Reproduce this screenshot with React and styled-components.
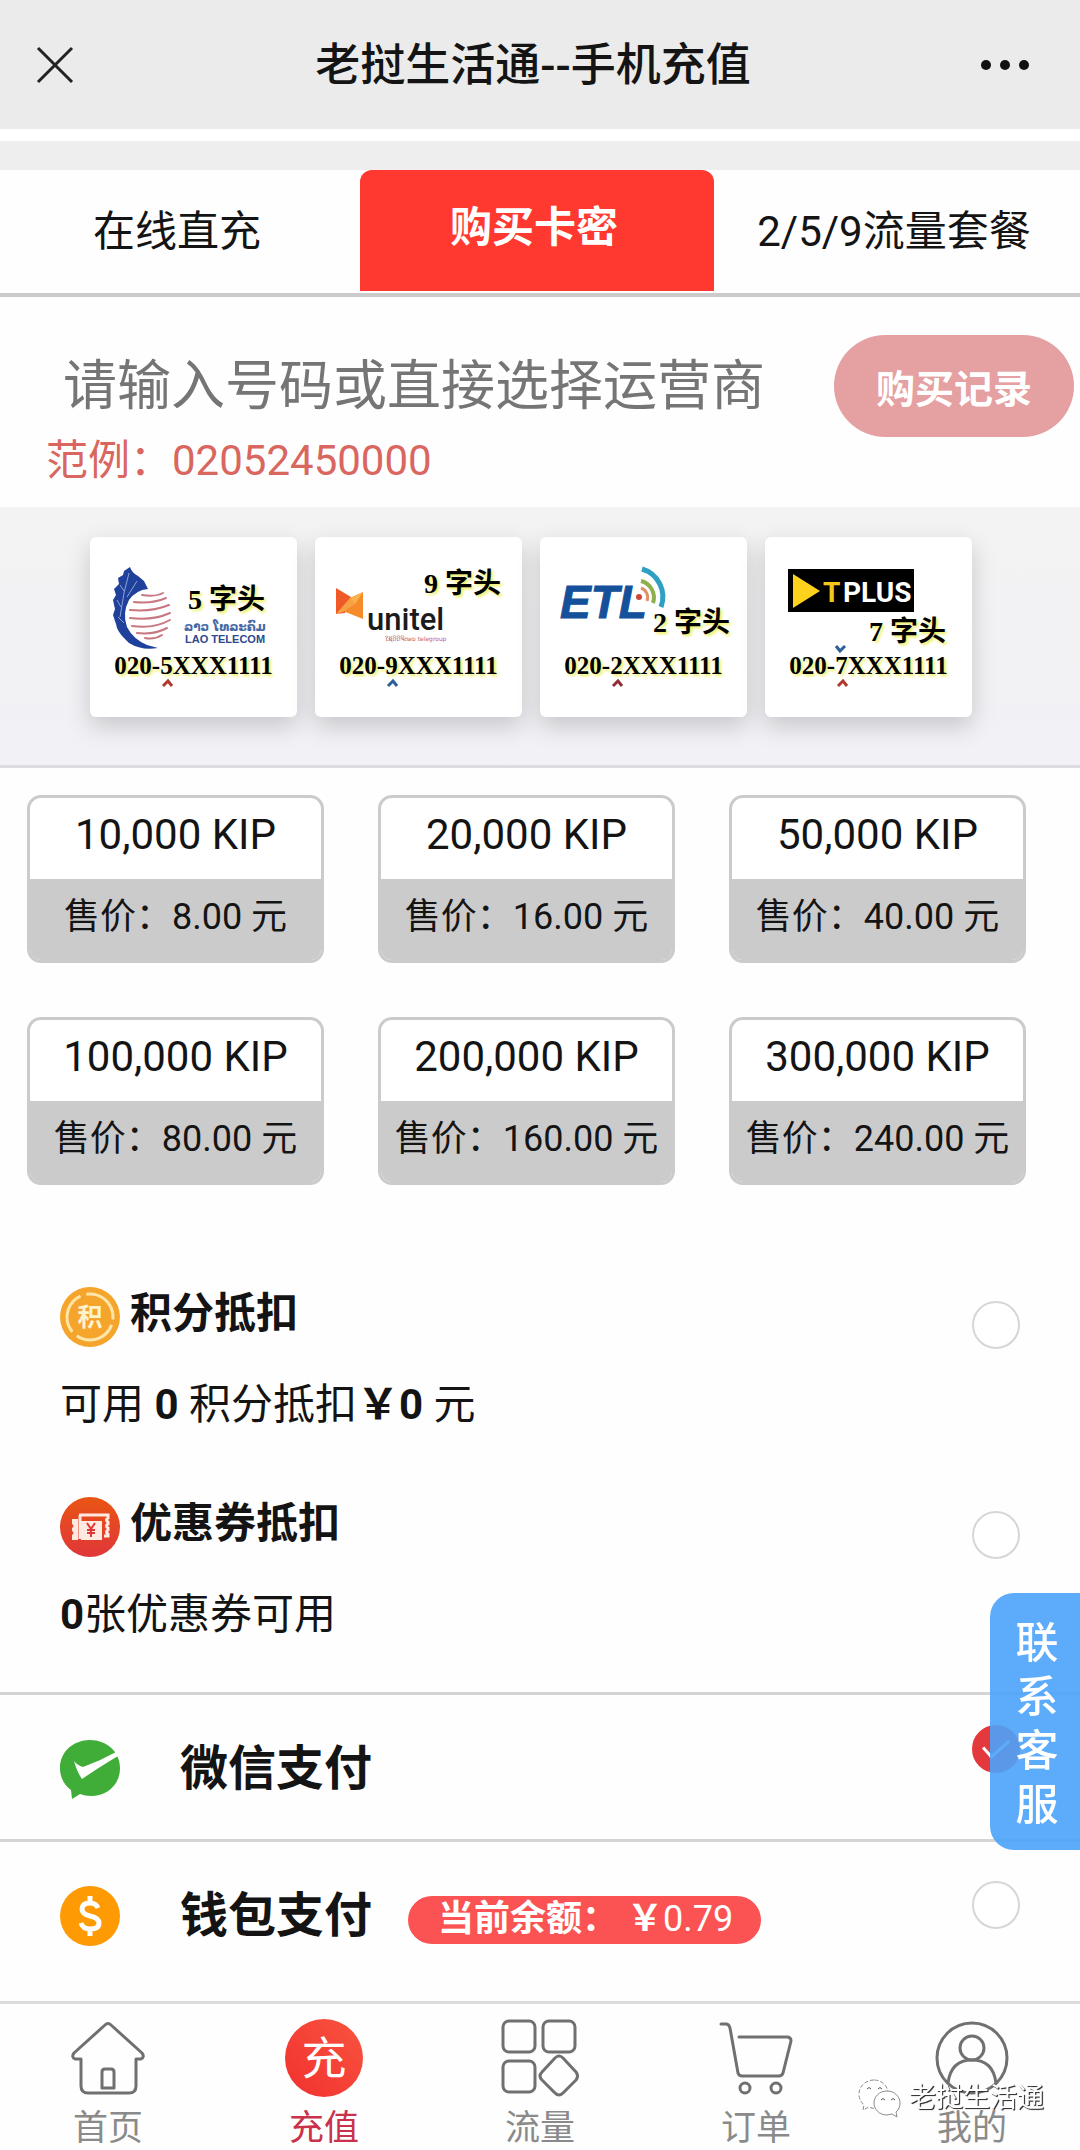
// App.jsx
import { useState } from "react";
import styled, { createGlobalStyle } from "styled-components";

const GlobalStyle = createGlobalStyle`
  * {
    box-sizing: border-box;
  }

  body {
    margin: 0;
    background: #fefefe;
    color: #141414;
    font-family: Roboto, "Noto Sans CJK SC", sans-serif;
  }

  button,
  input {
    font-family: inherit;
    color: inherit;
    margin: 0;
    padding: 0;
    border: none;
    background: none;
  }

  button {
    cursor: pointer;
  }
`;

const Page = styled.div`
  display: flex;
  flex-direction: column;
  min-height: 100vh;
`;

const Header = styled.header`
  display: grid;
  grid-template-columns: 1fr auto 1fr;
  align-items: center;
  height: 129px;
  padding: 0 50px 0 36px;
  background: #ebebeb;
`;

const HeaderButton = styled.button`
  display: flex;
  justify-self: ${(props) => (props.$end ? "end" : "start")};
`;

const Title = styled.h1`
  margin: 0;
  padding-top: 2px;
  font-size: 45px;
  font-weight: 500;
  line-height: 60px;
`;

const Strip = styled.div`
  height: 41px;
  border-top: 12px solid #fff;
  background: #eee;
`;

const Tabs = styled.nav`
  display: grid;
  grid-template-columns: 360fr 354fr 366fr;
  height: 127px;
  padding-bottom: 2px;
  border-bottom: 4px solid #cbcbcb;
`;

const Tab = styled.button`
  font-size: 42px;
  white-space: nowrap;
  font-weight: ${(props) => (props.$active ? 700 : 400)};
  color: ${(props) => (props.$active ? "#fff" : "#141414")};
  background: ${(props) => (props.$active ? "#ff3830" : "transparent")};
  border-radius: 12px 12px 0 0;
  padding: 0 6px ${(props) => (props.$active ? 14 : 6)}px 0;
`;

const Search = styled.section`
  display: flex;
  align-items: flex-start;
  padding: 38px 6px 20px 46px;
`;

const Field = styled.div`
  flex: 1;
  min-width: 0;
`;

const NumberInput = styled.input`
  display: block;
  width: 100%;
  height: 100px;
  padding: 2px 0 0 17px;
  font-size: 54px;
  outline: none;

  &::placeholder {
    color: #757575;
    opacity: 1;
  }
`;

const Hint = styled.p`
  margin: 0;
  font-size: 42px;
  line-height: 52px;
  color: #d9665f;
`;

const RecordButton = styled.button`
  width: 240px;
  height: 102px;
  border-radius: 51px;
  background: #e5a0a1;
  color: #fff;
  font-size: 39px;
  font-weight: 700;
`;

const Operators = styled.section`
  display: grid;
  grid-template-columns: repeat(4, 1fr);
  gap: 18px;
  padding: 30px 108px 48px 90px;
  border-bottom: 3px solid #dcdce2;
  background: linear-gradient(#f3f3f3, #f1f1f6);
`;

const OperatorCard = styled.button`
  display: flex;
  flex-direction: column;
  align-items: center;
  height: 180px;
  border-radius: 6px;
  background: #fff;
  box-shadow: 0 9px 24px rgba(0, 0, 0, 0.18);

  svg {
    display: block;
    overflow: visible;
  }
`;

const Sample = styled.span`
  font-family: "Liberation Serif", serif;
  font-size: 25px;
  font-weight: 700;
  line-height: 30px;
  color: #000;
  text-shadow: 2px 2px 3px #eeee5c;
`;

const Prefix = styled.text`
  font-family: "Liberation Serif", "Noto Sans CJK SC", serif;
  font-size: 28px;
  font-weight: 700;
  fill: #000;
  text-shadow: 2px 2px 3px #eeee5c;
`;

const Amounts = styled.section`
  display: grid;
  grid-template-columns: repeat(3, 1fr);
  gap: 54px;
  padding: 27px 54px 0 27px;
`;

const AmountCard = styled.button`
  display: flex;
  flex-direction: column;
  height: 168px;
  border: 3px solid #cbcbcb;
  border-radius: 14px;
  overflow: hidden;
  background: #fff;
`;

const Amount = styled.span`
  width: 100%;
  height: 81px;
  font-size: 42px;
  line-height: 74px;
`;

const Price = styled.span`
  flex: 1;
  width: 100%;
  font-size: 36px;
  line-height: 76px;
  white-space: nowrap;
  background: #cbcbcb;
`;

const Discounts = styled.section`
  display: flex;
  flex-direction: column;
  gap: 57px;
  padding: 96px 60px 48px;
`;

const Discount = styled.label`
  display: flex;
  justify-content: space-between;
  align-items: flex-start;
  height: 153px;
`;

const DiscountTitle = styled.span`
  display: flex;
  align-items: center;
  gap: 10px;
  height: 72px;
  font-size: 42px;
  font-weight: 700;
  line-height: 60px;
`;

const DiscountName = styled.span`
  padding-bottom: 6px;
`;

const DiscountText = styled.span`
  display: block;
  margin-top: 22px;
  font-size: 42px;
  line-height: 60px;
`;

const Tick = styled.input`
  appearance: none;
  display: grid;
  place-content: center;
  flex: none;
  width: 48px;
  height: 48px;
  margin-top: 20px;
  border: 2px solid #d6d6d6;
  border-radius: 50%;
  background: #fff;

  &:checked {
    border-color: #e4393c;
    background: #e4393c;
  }

  &:checked::after {
    content: "";
    width: 22px;
    height: 11px;
    border: solid #fff;
    border-width: 0 0 3px 3px;
    transform: rotate(-42deg) translate(2px, -3px);
  }
`;

const PayTick = styled(Tick)`
  align-self: flex-start;
  margin-top: ${(props) => (props.checked ? 27 : 36)}px;
  margin-left: auto;
`;

const PayRow = styled.label`
  display: flex;
  align-items: center;
  height: 147px;
  padding: 3px 60px 0;
  border-top: 3px solid #d4d4d4;
`;

const PayName = styled.span`
  margin-left: 60px;
  font-size: 48px;
  font-weight: 700;
  line-height: 60px;
`;

const Balance = styled.span`
  height: 48px;
  margin: 9px 0 0 36px;
  padding: 0 28px 0 30px;
  border-radius: 24px;
  background: #fb5253;
  color: #fff;
  font-size: 36px;
  line-height: 46px;
  white-space: pre;
`;

const Contact = styled.button`
  position: fixed;
  right: 0;
  bottom: 300px;
  display: flex;
  flex-direction: column;
  align-items: center;
  justify-content: center;
  width: 90px;
  height: 257px;
  padding: 4px 0 0 4px;
  border-radius: 24px 0 0 24px;
  background: rgba(75, 163, 251, 0.9);
  color: #fff;
  font-size: 43px;
  font-weight: 500;
  line-height: 54px;
`;

const TabBar = styled.nav`
  display: grid;
  grid-template-columns: repeat(5, 1fr);
  height: 149px;
  margin-top: auto;
  padding-top: 15px;
  border-top: 3px solid #dcdcdc;
`;

const TabItem = styled.a`
  display: flex;
  flex-direction: column;
  align-items: center;
  gap: 12px;
  color: ${(props) => (props.$active ? "#c9324a" : "#8a8a8a")};
  font-size: 35px;
  line-height: 40px;
  text-decoration: none;
`;

const Watermark = styled.div`
  position: fixed;
  right: 36px;
  bottom: 32px;
  display: flex;
  align-items: center;
  gap: 8px;
  color: #fff;
  font-size: 27px;
  line-height: 30px;
  text-shadow: 1px 1px 1px #333, 1px 1px 0 #555;
`;

const LaoTelecomArt = () => (
  <svg width="207" height="114" viewBox="0 0 207 114" aria-hidden="true">
    <path
      d="M40 30 Q42 36 48 39 L54 44 L58 52 Q46 53 39 63 Q32 76 37 90 Q43 102 57 108 L68 111 Q52 114 39 106 L34 101 Q27 94 26 87 L23 78 L25 72 L23 63 L26 58 L24 52 L29 47 L28 41 L33 38 L34 34 Z"
      fill="#1f419b"
    />
    <path
      d="M39 36 L34 56 L30 80 M47 44 L37 60 M30 48 L34 54 M27 63 L31 70 M28 80 L34 86"
      stroke="#8ea2d4"
      strokeWidth="1"
      fill="none"
    />
    <g fill="none" stroke="#c87880" strokeWidth="2" strokeLinecap="round">
      <path d="M52 58 Q66 60 73 56" />
      <path d="M44 65 Q62 67 76 61" />
      <path d="M40 73 Q62 75 79 68" />
      <path d="M40 81 Q62 84 80 76" />
      <path d="M42 89 Q64 92 80 83" />
      <path d="M47 96 Q64 98 77 91" />
      <path d="M55 101 Q64 103 72 98" />
    </g>
    <Prefix x="98" y="72">5 字头</Prefix>
    <text x="94" y="94" fontFamily="DejaVu Sans" fontSize="12" fontWeight="700" fill="#4668a5">
      ລາວ ໂທລະຄົມ
    </text>
    <text x="95" y="106" fontFamily="Liberation Sans" fontSize="11" fontWeight="700" fill="#2d4a8d">
      LAO TELECOM
    </text>
  </svg>
);

const UnitelArt = () => (
  <svg width="207" height="114" viewBox="0 0 207 114" aria-hidden="true">
    <path d="M21 51 L36 60 L30 76 L21 77 Z" fill="#ef5a28" />
    <path d="M48 55 L35 61 L28 74 L48 82 Z" fill="#f68b2c" />
    <path d="M48 55 L35 61 L40 67 Z" fill="#fbb14c" />
    <path d="M21 77 L35 61 L40 67 L28 75 Z" fill="#f9a045" />
    <text x="52" y="93" fontFamily="Roboto" fontSize="31" fontWeight="500" fill="#1b1b1b">
      unitel
    </text>
    <text x="70" y="104" fontFamily="DejaVu Sans" fontSize="6" fill="#c05a6a">
      ໃຊ້ດີດີຈີຕອນ telegroup
    </text>
    <Prefix x="109" y="56">9 字头</Prefix>
  </svg>
);

const EtlArt = () => (
  <svg width="207" height="114" viewBox="0 0 207 114" aria-hidden="true">
    <text
      x="20"
      y="81"
      fontFamily="Liberation Sans"
      fontSize="46"
      fontWeight="700"
      fontStyle="italic"
      fill="#15509a"
      stroke="#15509a"
      strokeWidth="1"
    >
      ETL
    </text>
    <circle cx="100" cy="59" r="6" fill="#fff" />
    <circle cx="99" cy="60" r="3" fill="#cc4a35" />
    <g fill="none">
      <path d="M101 51 A10 10 0 0 1 107 64" stroke="#e0916a" strokeWidth="3" />
      <path d="M101 44 A17 17 0 0 1 113 66" stroke="#8fae4e" strokeWidth="4" />
      <path d="M102 32 A29 29 0 0 1 121 70" stroke="#2f9fc4" strokeWidth="5" />
    </g>
    <Prefix x="113" y="95">2 字头</Prefix>
  </svg>
);

const TplusArt = () => (
  <svg width="207" height="114" viewBox="0 0 207 114" aria-hidden="true">
    <rect x="23" y="32" width="126" height="43" fill="#000" />
    <path d="M28 37 L55 54 L28 71 Z" fill="#fcd21c" />
    <text y="65" fontFamily="Roboto" fontSize="28" fontWeight="700" fill="#f6c81d">
      <tspan x="58">T</tspan>
      <tspan x="78" fill="#fff">
        PLUS
      </tspan>
    </text>
    <Prefix x="104" y="104">7 字头</Prefix>
    <path d="M71 109 L75 114 L80 109" fill="none" stroke="#2d5f9a" strokeWidth="3" />
  </svg>
);

const Caret = ({ color }) => (
  <svg width="207" height="10" viewBox="0 0 207 10" aria-hidden="true">
    <path d="M73 5 L78 0 L82 5" fill="none" stroke={color} strokeWidth="3" />
  </svg>
);

const PointsIcon = () => (
  <svg width="60" height="60" viewBox="0 0 60 60" aria-hidden="true">
    <circle cx="30" cy="30" r="30" fill="#f5a42c" />
    <circle
      cx="30"
      cy="30"
      r="23"
      fill="none"
      stroke="#ffe6a8"
      strokeWidth="3"
      strokeDasharray="42 6"
      transform="rotate(20 30 30)"
    />
    <text x="30" y="39" textAnchor="middle" fontSize="25" fontWeight="700" fill="#fff3cf">
      积
    </text>
  </svg>
);

const CouponIcon = () => (
  <svg width="60" height="60" viewBox="0 0 60 60" aria-hidden="true">
    <defs>
      <linearGradient id="coupon" x1="0" y1="0" x2="0" y2="1">
        <stop offset="0" stopColor="#e95513" />
        <stop offset="1" stopColor="#e0363a" />
      </linearGradient>
    </defs>
    <circle cx="30" cy="30" r="30" fill="url(#coupon)" />
    <path d="M12 22 h6 v21 h-6 v-5 q3-2 0-4 v-3 q3-2 0-4 z" fill="#ffe9e0" />
    <path d="M19 18 h29 v3 q-3 2 0 4 v2 q-3 2 0 4 v2 q-3 2 0 4 v2 h-4" fill="none" stroke="#ffe9e0" strokeWidth="3" />
    <path d="M20 18 v24" stroke="#ffe9e0" strokeWidth="3" />
    <rect x="21" y="24" width="21" height="19" fill="#ffe9e0" />
    <path d="M27 26 l4 6 l4 -6 M31 32 v8 M27 33 h8 M27 36 h8" fill="none" stroke="#e0363a" strokeWidth="2" />
  </svg>
);

const WechatPayIcon = () => (
  <svg width="60" height="60" viewBox="0 0 60 60" aria-hidden="true">
    <path
      d="M30 1 C47 1 60 13 60 29 C60 46 47 57 31 57 C27 57 23 56 20 55 L12 60 L11 51 C4 46 0 38 0 29 C0 13 13 1 30 1 Z"
      fill="#3fad37"
    />
    <path d="M14 22 Q17 26 23 28 Q40 22 56 13 Q58 16 58 17 Q38 29 22 40 Q17 33 14 22 Z" fill="#fff" />
  </svg>
);

const WalletIcon = () => (
  <svg width="60" height="60" viewBox="0 0 60 60" aria-hidden="true">
    <circle cx="30" cy="30" r="30" fill="#fd9a04" />
    <path
      d="M38 22 Q36 17 30 17 Q22 17 22 23 Q22 28 30 30 Q39 32 39 37 Q39 43 30 43 Q23 43 21 37 M30 10 V18 M30 42 V50"
      fill="none"
      stroke="#fff"
      strokeWidth="5"
    />
  </svg>
);

const lineIcon = {
  width: 78,
  height: 78,
  viewBox: "0 0 78 78",
  fill: "none",
  stroke: "#707070",
  strokeWidth: 3,
  strokeLinecap: "round",
  strokeLinejoin: "round",
  "aria-hidden": true,
};

const HomeIcon = () => (
  <svg {...lineIcon}>
    <path d="M12 40 H6 Q2 38 5 34 L36 6 Q39 3 42 6 L73 34 Q76 38 72 40 H67 V67 Q67 74 60 74 H19 Q12 74 12 67 Z" />
    <path d="M33 69 V53 Q33 50 36 50 H42 Q45 50 45 53 V69 Z" />
  </svg>
);

const RechargeIcon = () => (
  <svg width="78" height="78" viewBox="0 0 78 78" aria-hidden="true">
    <defs>
      <linearGradient id="recharge" x1="0" y1="1" x2="1" y2="0">
        <stop offset="0" stopColor="#f2302f" />
        <stop offset="1" stopColor="#f8543f" />
      </linearGradient>
    </defs>
    <circle cx="39" cy="39" r="39" fill="url(#recharge)" />
    <text x="39" y="56" textAnchor="middle" fontSize="45" fill="#fff">
      充
    </text>
  </svg>
);

const FlowIcon = () => (
  <svg {...lineIcon}>
    <rect x="2" y="2" width="32" height="31" rx="6" />
    <rect x="42" y="2" width="32" height="31" rx="6" />
    <rect x="2" y="42" width="32" height="31" rx="6" />
    <path d="M54 39 Q58 35 62 39 L75 53 Q78 57 75 61 L62 74 Q58 78 54 74 L41 61 Q37 57 41 53 Z" />
  </svg>
);

const CartIcon = () => (
  <svg {...lineIcon}>
    <path d="M4 5 H9 Q12 5 13 9 L21 54 Q22 57 25 57 H62 Q65 57 66 54 L74 22 Q74 18 70 18 H22" />
    <circle cx="28" cy="69" r="5" />
    <circle cx="59" cy="69" r="5" />
  </svg>
);

const UserIcon = () => (
  <svg {...lineIcon}>
    <circle cx="39" cy="39" r="35" />
    <circle cx="39" cy="29" r="12" />
    <path d="M15 64 Q18 41 39 41 Q60 41 63 64" />
  </svg>
);

const ChatLogo = () => (
  <svg width="43" height="40" viewBox="0 0 43 40" fill="#fff" stroke="#8a8a8a" aria-hidden="true">
    <path d="M16 2 C8 2 1 8 1 16 C1 21 3 24 6 27 L5 32 L11 29 Q15 31 19 30 L30 14 C29 7 23 2 16 2 Z" strokeDasharray="4 2" />
    <path d="M29 13 C21 13 16 19 16 25 C16 31 21 37 29 37 L34 36 L39 39 L38 34 C41 32 42 28 42 25 C42 19 37 13 29 13 Z" />
    <path d="M9 11 q2-3 4 0 M20 11 q2-3 4 0 M23 22 q2-3 4 0 M33 22 q2-3 4 0" stroke="#555" />
  </svg>
);

const tabs = ["在线直充", "购买卡密", "2/5/9流量套餐"];

const operators = [
  { name: "Lao Telecom", art: <LaoTelecomArt />, sample: "020-5XXX1111", caret: "#b0392f" },
  { name: "Unitel", art: <UnitelArt />, sample: "020-9XXX1111", caret: "#2d5f9a" },
  { name: "ETL", art: <EtlArt />, sample: "020-2XXX1111", caret: "#8f2f3a" },
  { name: "TPLUS", art: <TplusArt />, sample: "020-7XXX1111", caret: "#b0392f" },
];

const amounts = [
  { kip: "10,000", price: "8.00" },
  { kip: "20,000", price: "16.00" },
  { kip: "50,000", price: "40.00" },
  { kip: "100,000", price: "80.00" },
  { kip: "200,000", price: "160.00" },
  { kip: "300,000", price: "240.00" },
];

const links = [
  { label: "首页", icon: <HomeIcon /> },
  { label: "充值", icon: <RechargeIcon /> },
  { label: "流量", icon: <FlowIcon /> },
  { label: "订单", icon: <CartIcon /> },
  { label: "我的", icon: <UserIcon /> },
];

const App = () => {
  const [tab, setTab] = useState(1);
  const [pay, setPay] = useState("wechat");

  return (
    <Page>
      <GlobalStyle />
      <Header>
        <HeaderButton aria-label="关闭">
          <svg width="38" height="38" viewBox="0 0 38 38" stroke="#222" strokeWidth="3">
            <path d="M2 2 L36 36 M36 2 L2 36" />
          </svg>
        </HeaderButton>
        <Title>老挝生活通--手机充值</Title>
        <HeaderButton $end aria-label="更多">
          <svg width="50" height="12" viewBox="0 0 50 12" fill="#111">
            <circle cx="6" cy="6" r="5" />
            <circle cx="25" cy="6" r="5" />
            <circle cx="44" cy="6" r="5" />
          </svg>
        </HeaderButton>
      </Header>
      <Strip />
      <Tabs>
        {tabs.map((name, i) => (
          <Tab key={name} $active={i === tab} onClick={() => setTab(i)}>
            {name}
          </Tab>
        ))}
      </Tabs>

      <Search>
        <Field>
          <NumberInput type="tel" aria-label="手机号码" placeholder="请输入号码或直接选择运营商" />
          <Hint>范例：02052450000</Hint>
        </Field>
        <RecordButton>购买记录</RecordButton>
      </Search>

      <Operators>
        {operators.map((op) => (
          <OperatorCard key={op.name} aria-label={op.name}>
            {op.art}
            <Sample>{op.sample}</Sample>
            <Caret color={op.caret} />
          </OperatorCard>
        ))}
      </Operators>

      <Amounts>
        {amounts.map((item) => (
          <AmountCard key={item.kip}>
            <Amount>{item.kip} KIP</Amount>
            <Price>售价：{item.price} 元</Price>
          </AmountCard>
        ))}
      </Amounts>

      <Discounts>
        <Discount>
          <span>
            <DiscountTitle>
              <PointsIcon />
              <DiscountName>积分抵扣</DiscountName>
            </DiscountTitle>
            <DiscountText>
              可用 <b>0</b> 积分抵扣<b>￥0</b> 元
            </DiscountText>
          </span>
          <Tick type="checkbox" name="points" />
        </Discount>
        <Discount>
          <span>
            <DiscountTitle>
              <CouponIcon />
              <DiscountName>优惠券抵扣</DiscountName>
            </DiscountTitle>
            <DiscountText>
              <b>0</b>张优惠券可用
            </DiscountText>
          </span>
          <Tick type="checkbox" name="coupon" />
        </Discount>
      </Discounts>

      <PayRow>
        <WechatPayIcon />
        <PayName>微信支付</PayName>
        <PayTick type="radio" name="pay" checked={pay === "wechat"} onChange={() => setPay("wechat")} />
      </PayRow>
      <PayRow>
        <WalletIcon />
        <PayName>钱包支付</PayName>
        <Balance>
          <b>当前余额： ￥</b>0.79
        </Balance>
        <PayTick type="radio" name="pay" checked={pay === "wallet"} onChange={() => setPay("wallet")} />
      </PayRow>

      <TabBar>
        {links.map((link, i) => (
          <TabItem key={link.label} href="#" $active={i === 1}>
            {link.icon}
            {link.label}
          </TabItem>
        ))}
      </TabBar>

      <Contact aria-label="联系客服">
        {[..."联系客服"].map((char) => (
          <span key={char}>{char}</span>
        ))}
      </Contact>
      <Watermark>
        <ChatLogo />
        老挝生活通
      </Watermark>
    </Page>
  );
};

export default App;
